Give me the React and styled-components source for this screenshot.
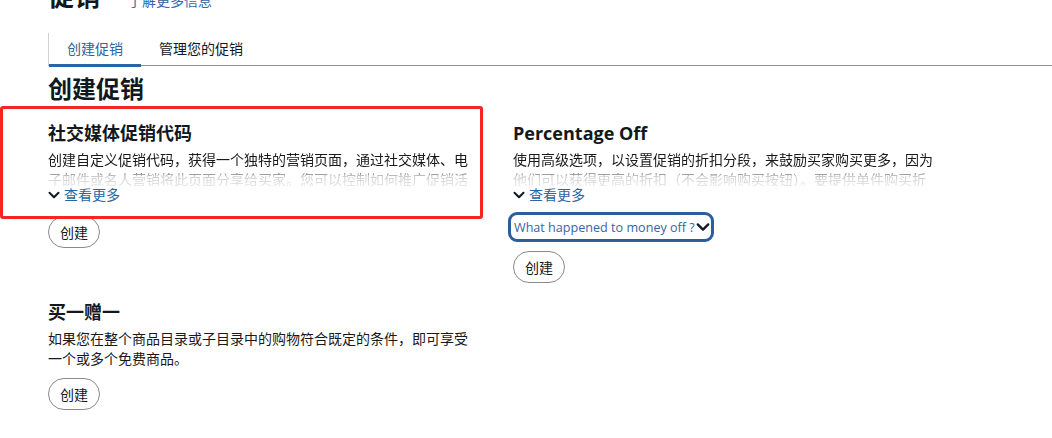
import React from "react";
import styled, { createGlobalStyle } from "styled-components";

const Global = createGlobalStyle`
  html, body { margin: 0; padding: 0; background: #fff; }
  body {
    font-family: "Open Sans", "Noto Sans CJK SC", sans-serif;
    color: #111820;
    overflow: hidden;
  }
`;

const Page = styled.div`
  margin-top: -20px;
  padding-left: 48px;
`;

const Header = styled.div`
  display: flex;
  align-items: baseline;
  gap: 28px;
  height: 32px;
`;

const PageTitle = styled.h1`
  margin: 0;
  font-size: 26px;
  line-height: 32px;
  font-weight: 700;
`;

const HeaderLink = styled.a`
  font-size: 14px;
  color: #3665a8;
  text-decoration: none;
`;

const Tabs = styled.div`
  display: flex;
  margin-top: 21px;
  border-left: 1px solid #d0d0d0;
  border-bottom: 1px solid #8f8f8f;
  height: 32px;
`;

const Tab = styled.div`
  padding: 0 18px;
  font-size: 14px;
  line-height: 31px;
  color: ${(p) => (p.$active ? "#2b64a3" : "#111820")};
  border-bottom: 3px solid ${(p) => (p.$active ? "#2b64a3" : "transparent")};
  margin-bottom: -2px;
`;

const Heading = styled.h2`
  margin: 7px 0 0;
  font-size: 24px;
  line-height: 32px;
  font-weight: 700;
`;

const Grid = styled.div`
  display: grid;
  grid-template-columns: 430px 430px;
  column-gap: 35px;
  row-gap: 17px;
  margin-top: 16px;
  align-items: start;
`;

const Card = styled.div`
  position: relative;
  display: flex;
  flex-direction: column;
  align-items: flex-start;
`;

const CardTitle = styled.h3`
  margin: 0;
  font-size: 18px;
  line-height: 24px;
  font-weight: 700;
`;

const Desc = styled.p`
  margin: 5px 0 0;
  font-size: 14px;
  line-height: 20px;
  color: #191919;
  ${(p) =>
    p.$clamped &&
    `
    max-height: 36px;
    overflow: hidden;
    -webkit-mask-image: linear-gradient(to bottom, #000 20px, rgba(0,0,0,0.22) 26px, rgba(0,0,0,0.1) 36px);
    mask-image: linear-gradient(to bottom, #000 20px, rgba(0,0,0,0.22) 26px, rgba(0,0,0,0.1) 36px);
  `}
`;

const MoreLink = styled.a`
  display: flex;
  align-items: center;
  gap: 4px;
  margin-top: 0;
  font-size: 14px;
  line-height: 18px;
  color: #2b64a3;
  text-decoration: none;
  cursor: pointer;
`;

const Chevron = ({ size = 12 }) => (
  <svg width={size} height={size} viewBox="0 0 12 12" aria-hidden="true">
    <path d="M1.5 3.8 L6 8.2 L10.5 3.8" fill="none" stroke="#111820" strokeWidth="2" strokeLinecap="round" strokeLinejoin="round" />
  </svg>
);

const Disclosure = styled.button`
  display: flex;
  align-items: center;
  gap: 1px;
  margin: 8px 0 0 -5px;
  padding: 0 1px 0 3px;
  height: 30px;
  border: 3px solid #2a5f9c;
  border-radius: 9px;
  background: #fff;
  font-family: "Open Sans", sans-serif;
  font-size: 12.6px;
  color: #3665a8;
  cursor: pointer;
`;

const Button = styled.button`
  box-sizing: border-box;
  margin-top: ${(p) => p.$mt || 12}px;
  height: 32px;
  min-width: 52px;
  padding: 0 11px;
  border: 1px solid #8a8a8a;
  border-radius: 16px;
  background: #fff;
  font-family: "Noto Sans CJK SC", sans-serif;
  font-size: 14px;
  color: #111820;
  cursor: pointer;
`;

const Highlight = styled.div`
  position: absolute;
  left: -48px;
  top: -15px;
  width: 483px;
  height: 113px;
  box-sizing: border-box;
  border: 3px solid #f52525;
  border-radius: 3px;
  pointer-events: none;
`;

export default function App() {
  return (
    <>
      <Global />
      <Page>
        <Header>
          <PageTitle>促销</PageTitle>
          <HeaderLink href="#">了解更多信息</HeaderLink>
        </Header>
        <Tabs>
          <Tab $active>创建促销</Tab>
          <Tab>管理您的促销</Tab>
        </Tabs>
        <Heading>创建促销</Heading>
        <Grid>
          <Card>
            <Highlight />
            <CardTitle>社交媒体促销代码</CardTitle>
            <Desc $clamped>
              创建自定义促销代码，获得一个独特的营销页面，通过社交媒体、电子邮件或名人营销将此页面分享给买家。您可以控制如何推广促销活动。
            </Desc>
            <MoreLink>
              <Chevron />
              <span>查看更多</span>
            </MoreLink>
            <Button $mt={12}>创建</Button>
          </Card>
          <Card>
            <CardTitle>Percentage Off</CardTitle>
            <Desc $clamped>
              使用高级选项，以设置促销的折扣分段，来鼓励买家购买更多，因为他们可以获得更高的折扣（不会影响购买按钮）。要提供单件购买折扣，请使用降价活动。
            </Desc>
            <MoreLink>
              <Chevron />
              <span>查看更多</span>
            </MoreLink>
            <Disclosure>
              What happened to money off ?
              <Chevron size={14} />
            </Disclosure>
            <Button $mt={9}>创建</Button>
          </Card>
          <Card>
            <CardTitle>买一赠一</CardTitle>
            <Desc>
              如果您在整个商品目录或子目录中的购物符合既定的条件，即可享受一个或多个免费商品。
            </Desc>
            <Button $mt={9}>创建</Button>
          </Card>
        </Grid>
      </Page>
    </>
  );
}
